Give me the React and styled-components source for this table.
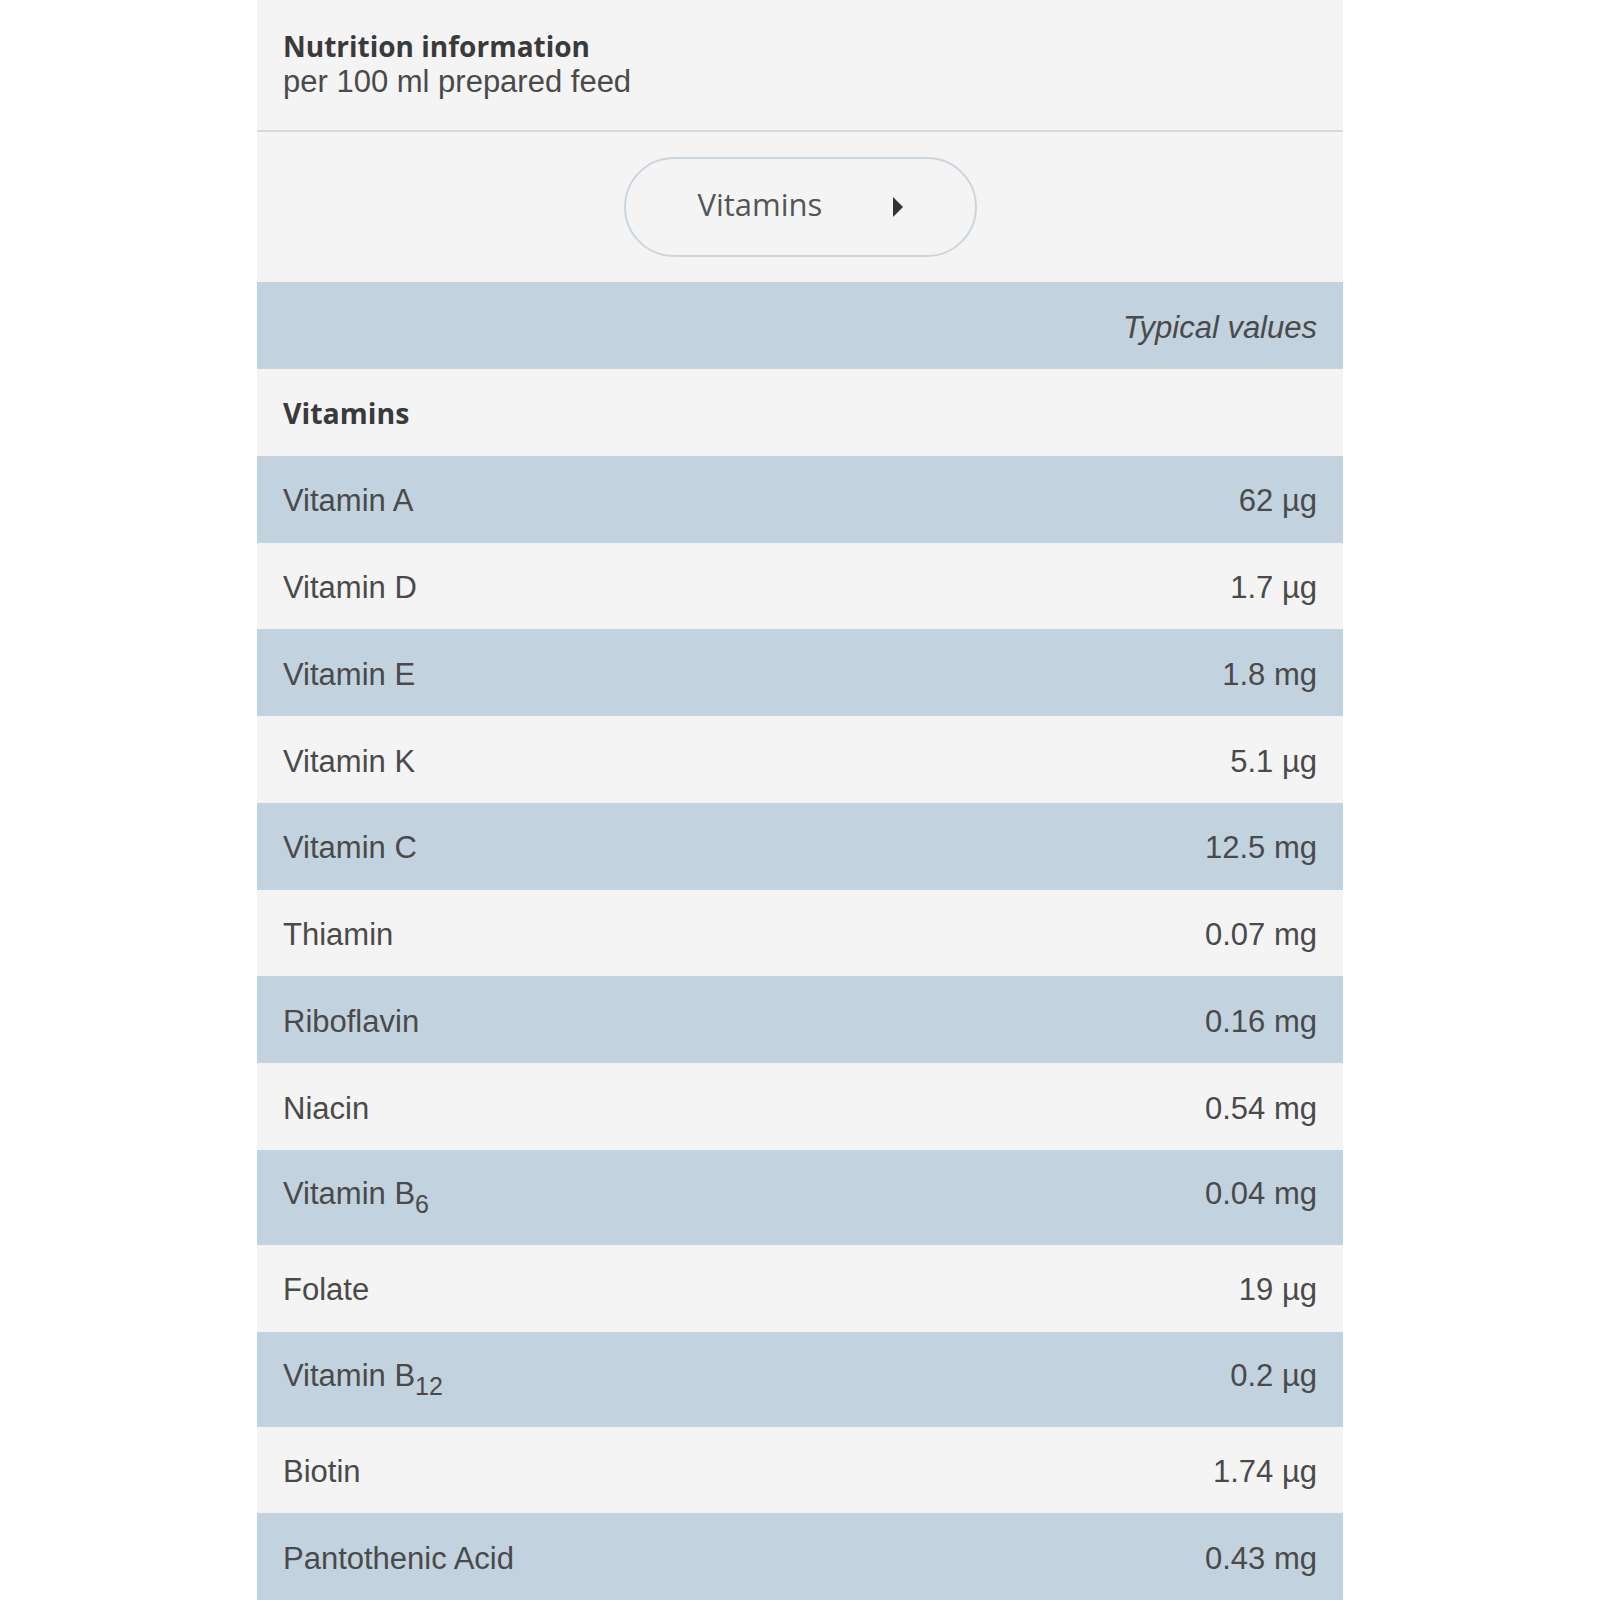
import React from "react";
import styled, { createGlobalStyle } from "styled-components";

const Global = createGlobalStyle`
  html, body { margin: 0; padding: 0; background: #ffffff; }
  body { font-family: "Liberation Sans", Arial, sans-serif; }
`;

const Panel = styled.section`
  width: 1086px;
  margin: 0 auto;
  background: #f4f4f4;
  color: #4a4a4a;
`;

const Header = styled.header`
  padding: 29px 26px 30px;
  border-bottom: 2px solid #d6dadf;
`;

const Title = styled.h2`
  margin: 0;
  font-family: "Open Sans", "Liberation Sans", sans-serif;
  font-weight: 700;
  font-size: 28px;
  line-height: 35px;
  color: #3a3a3a;
`;

const Subtitle = styled.p`
  margin: 0;
  font-size: 31px;
  line-height: 36px;
  color: #4a4a4a;
`;

const Selector = styled.div`
  display: flex;
  justify-content: center;
  padding: 25px 0 25px;
`;

const Pill = styled.button`
  display: flex;
  align-items: center;
  justify-content: space-between;
  box-sizing: border-box;
  width: 353px;
  height: 100px;
  padding: 0 72px 6px;
  border: 2px solid #cbd5de;
  border-radius: 50px;
  background: transparent;
  font-family: "Open Sans", "Liberation Sans", sans-serif;
  font-size: 31px;
  line-height: 40px;
  color: #555555;
  cursor: pointer;
`;

const Caret = styled.span`
  width: 0;
  height: 0;
  margin-top: 5px;
  border-top: 10px solid transparent;
  border-bottom: 10px solid transparent;
  border-left: 10px solid #333333;
`;

const Table = styled.table`
  width: 100%;
  border-collapse: collapse;
  font-size: 31px;
  line-height: 35px;
`;

const Row = styled.tr`
  background: ${(p) => (p.$shade ? "#c2d2df" : "#f4f4f4")};
`;

const Cell = styled.td`
  padding: 27.5px 26px 24.25px;
  text-align: ${(p) => (p.$right ? "right" : "left")};
  font-style: ${(p) => (p.$italic ? "italic" : "normal")};
  color: #4a4a4a;
  white-space: nowrap;
`;

const GroupCell = styled.th`
  padding: 27px 26px 25px;
  text-align: left;
  font-family: "Open Sans", "Liberation Sans", sans-serif;
  font-weight: 700;
  font-size: 28.5px;
  color: #3a3a3a;
`;

const Sub = styled.sub`
  font-size: 25px;
  line-height: 0;
  vertical-align: -9px;
`;

const SubRow = styled(Row)`
  & > td {
    padding-top: 26.5px;
    padding-bottom: 33.5px;
  }
`;

const rows = [
  ["Vitamin A", null, "62 µg"],
  ["Vitamin D", null, "1.7 µg"],
  ["Vitamin E", null, "1.8 mg"],
  ["Vitamin K", null, "5.1 µg"],
  ["Vitamin C", null, "12.5 mg"],
  ["Thiamin", null, "0.07 mg"],
  ["Riboflavin", null, "0.16 mg"],
  ["Niacin", null, "0.54 mg"],
  ["Vitamin B", "6", "0.04 mg"],
  ["Folate", null, "19 µg"],
  ["Vitamin B", "12", "0.2 µg"],
  ["Biotin", null, "1.74 µg"],
  ["Pantothenic Acid", null, "0.43 mg"],
];

export default function App() {
  return (
    <>
      <Global />
      <Panel>
        <Header>
          <Title>Nutrition information</Title>
          <Subtitle>per 100 ml prepared feed</Subtitle>
        </Header>
        <Selector>
          <Pill type="button">
            <span>Vitamins</span>
            <Caret />
          </Pill>
        </Selector>
        <Table>
          <tbody>
            <Row $shade>
              <Cell />
              <Cell $right $italic>Typical values</Cell>
            </Row>
            <Row>
              <GroupCell colSpan={2}>Vitamins</GroupCell>
            </Row>
            {rows.map(([name, sub, value], i) => {
              const R = sub ? SubRow : Row;
              return (
                <R key={name + (sub || "")} $shade={i % 2 === 0}>
                  <Cell>
                    {name}
                    {sub && <Sub>{sub}</Sub>}
                  </Cell>
                  <Cell $right>{value}</Cell>
                </R>
              );
            })}
          </tbody>
        </Table>
      </Panel>
    </>
  );
}
